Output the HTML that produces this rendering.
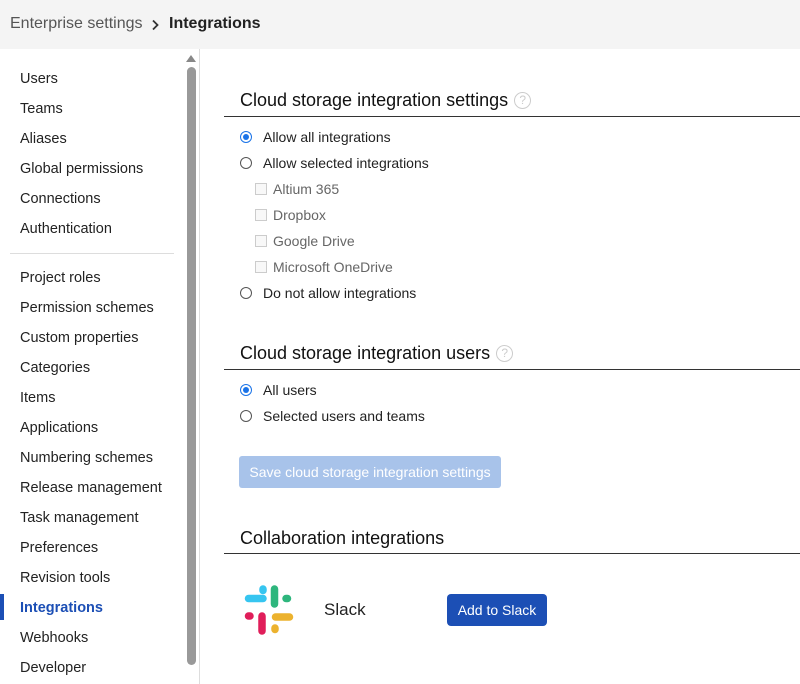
<!DOCTYPE html><html><head><style>
body{margin:0;width:800px;height:684px;overflow:hidden;font-family:"Liberation Sans",sans-serif;background:#fff;color:#222;position:relative}
.hdr{position:absolute;left:0;top:0;width:800px;height:49px;background:#f4f4f4}
.hdr span{position:absolute;top:15px;font-size:16px}
.side{position:absolute;left:0;top:49px;width:199px;height:635px;border-right:1px solid #ddd}
.it{position:absolute;left:20px;font-size:14.5px;color:#222}
.abs{position:absolute}
h2{position:absolute;margin:0;font-size:18px;font-weight:normal;color:#111;left:240px}
.rule{position:absolute;left:224px;width:576px;height:1px;background:#333}
.lbl{position:absolute;font-size:14px;color:#222}
.rad{position:absolute;left:240px;width:10px;height:10px;border:1px solid #555;border-radius:50%}
.chk{position:absolute;left:255px;width:10px;height:10px;border:1px solid #ccc;background:#f8f8f8}
.q{display:inline-block;width:15px;height:15px;border:1px solid #ccc;border-radius:50%;color:#ccc;font-size:12px;text-align:center;line-height:15px;margin-left:6px;vertical-align:2px}
</style></head><body>
<div class="hdr"><span style="left:10px;color:#555">Enterprise settings</span>
<svg class="abs" style="left:151px;top:19px" width="8" height="12" viewBox="0 0 8 12"><path d="M2 1.5L6.5 6L2 10.5" stroke="#333" stroke-width="1.8" fill="none"/></svg>
<span style="left:169px;color:#222;font-weight:bold;">Integrations</span></div>
<div class="side">
<div class="abs" style="left:186px;top:6px;width:0;height:0;border-left:5px solid transparent;border-right:5px solid transparent;border-bottom:7px solid #888"></div>
<div class="abs" style="left:187px;top:18px;width:9px;height:598px;background:#999;border-radius:5px"></div>
<div class="abs" style="left:10px;top:204px;width:164px;height:1px;background:#ddd"></div>
<div class="abs" style="left:0;top:545px;width:4px;height:26px;background:#1c4fb5"></div>
</div>
<div class="it" style="top:71px">Users</div>
<div class="it" style="top:101px">Teams</div>
<div class="it" style="top:131px">Aliases</div>
<div class="it" style="top:161px">Global permissions</div>
<div class="it" style="top:191px">Connections</div>
<div class="it" style="top:221px">Authentication</div>
<div class="it" style="top:270px">Project roles</div>
<div class="it" style="top:300px">Permission schemes</div>
<div class="it" style="top:330px">Custom properties</div>
<div class="it" style="top:360px">Categories</div>
<div class="it" style="top:390px">Items</div>
<div class="it" style="top:420px">Applications</div>
<div class="it" style="top:450px">Numbering schemes</div>
<div class="it" style="top:480px">Release management</div>
<div class="it" style="top:510px">Task management</div>
<div class="it" style="top:540px">Preferences</div>
<div class="it" style="top:570px">Revision tools</div>
<div class="it" style="top:600px;color:#1c4fb5;font-weight:bold">Integrations</div>
<div class="it" style="top:630px">Webhooks</div>
<div class="it" style="top:660px">Developer</div>

<h2 style="top:90px">Cloud storage integration settings<span class="q">?</span></h2>
<div class="rule" style="top:116px"></div>
<div class="rad" style="top:131px;border-color:#1a73e8;"><div class="abs" style="left:2px;top:2px;width:6px;height:6px;border-radius:50%;background:#1a73e8"></div></div>
<div class="lbl" style="left:263px;top:129px">Allow all integrations</div>
<div class="rad" style="top:157px"></div><div class="lbl" style="left:263px;top:155px">Allow selected integrations</div>
<div class="chk" style="top:183px"></div><div class="lbl" style="left:273px;top:181px;color:#666">Altium 365</div>
<div class="chk" style="top:209px"></div><div class="lbl" style="left:273px;top:207px;color:#666">Dropbox</div>
<div class="chk" style="top:235px"></div><div class="lbl" style="left:273px;top:233px;color:#666">Google Drive</div>
<div class="chk" style="top:261px"></div><div class="lbl" style="left:273px;top:259px;color:#666">Microsoft OneDrive</div>
<div class="rad" style="top:287px"></div><div class="lbl" style="left:263px;top:285px">Do not allow integrations</div>

<h2 style="top:343px">Cloud storage integration users<span class="q">?</span></h2>
<div class="rule" style="top:369px"></div>
<div class="rad" style="top:384px;border-color:#1a73e8;"><div class="abs" style="left:2px;top:2px;width:6px;height:6px;border-radius:50%;background:#1a73e8"></div></div>
<div class="lbl" style="left:263px;top:382px">All users</div>
<div class="rad" style="top:410px"></div><div class="lbl" style="left:263px;top:408px">Selected users and teams</div>
<div class="abs" style="left:239px;top:456px;width:262px;height:32px;background:#a8c3ea;border-radius:3px;color:#fff;font-size:14px;text-align:center;line-height:32px">Save cloud storage integration settings</div>

<h2 style="top:528px">Collaboration integrations</h2>
<div class="rule" style="top:553px"></div>
<svg class="abs" style="left:240px;top:582px" width="60" height="56" viewBox="0 0 60 56" stroke-linecap="round" stroke-width="7.5" fill="none">
<path d="M23 7V8.5" stroke="#36c5f0"/><path d="M8.5 16.5H23" stroke="#36c5f0"/>
<path d="M34.5 7V22" stroke="#2eb67d"/><path d="M46 16.5H47.5" stroke="#2eb67d"/>
<path d="M35.5 35H49.5" stroke="#ecb22e"/><path d="M35 46V47.5" stroke="#ecb22e"/>
<path d="M22 34V49" stroke="#e01e5a"/><path d="M8.5 34H10" stroke="#e01e5a"/>
</svg>
<div class="abs" style="left:324px;top:600px;font-size:17px;color:#222">Slack</div>
<div class="abs" style="left:447px;top:594px;width:100px;height:32px;background:#1c4fb5;border-radius:4px;color:#fff;font-size:14px;text-align:center;line-height:32px">Add to Slack</div>
</body></html>
